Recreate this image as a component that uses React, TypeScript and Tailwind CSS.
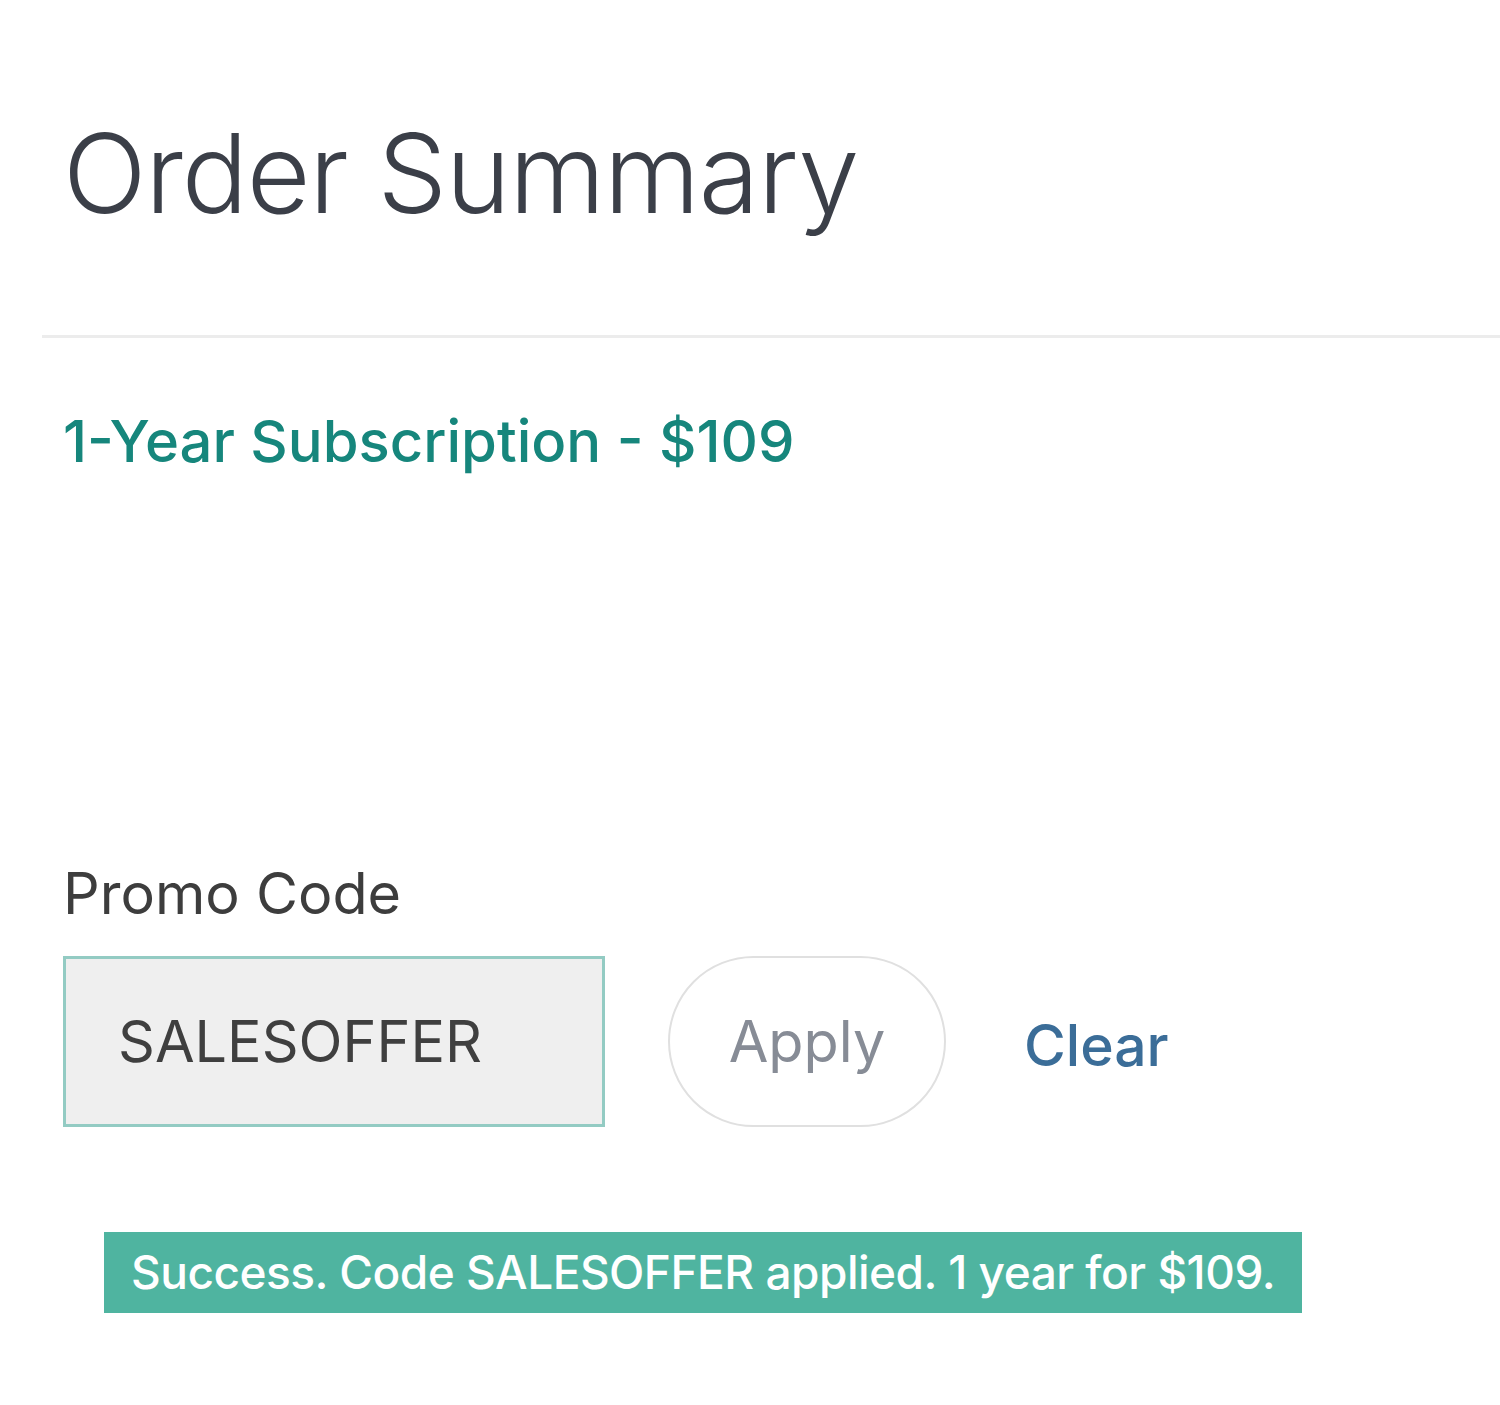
export default function App() {
  return (
    <div className="min-h-[1405px] w-[1500px] bg-white font-['Inter',sans-serif] overflow-hidden">
      <div className="pl-[42px]">
        <div className="pl-[21px] pt-[118px] pb-[107px]">
          <h1 className="text-[110px] leading-none font-light tracking-[-1.2px] text-[#3b3f48]">
            Order Summary
          </h1>
        </div>
        <div className="h-[3px] bg-[#ececec]" />
        <div className="pl-[21px] pt-[74px]">
          <p className="text-[58px] leading-none font-medium text-[#16867c]">
            1-Year Subscription - $109
          </p>
          <p className="mt-[395px] text-[57.5px] leading-none text-[#3d3d3d]">Promo Code</p>
          <div className="mt-[33px] flex items-center">
            <div className="w-[542px] h-[171px] bg-[#efefef] border-[3px] border-[#93cbc3] flex items-center pl-[52px] text-[57.5px] text-[#3f3f3f]">
              SALESOFFER
            </div>
            <button className="ml-[63px] w-[278px] h-[171px] rounded-[100px] border-[2px] border-[#e0e0e0] text-[57.5px] text-[#878c96]">
              Apply
            </button>
            <span className="ml-[78px] mt-[10px] text-[57px] font-medium text-[#3b6d98]">Clear</span>
          </div>
          <div className="mt-[105px] ml-[41px] w-[1198px] h-[81px] bg-[#4fb4a0] flex items-center pl-[27px] text-[46px] font-medium text-white tracking-[-0.5px]">
            Success. Code SALESOFFER applied. 1 year for $109.
          </div>
        </div>
      </div>
    </div>
  );
}
